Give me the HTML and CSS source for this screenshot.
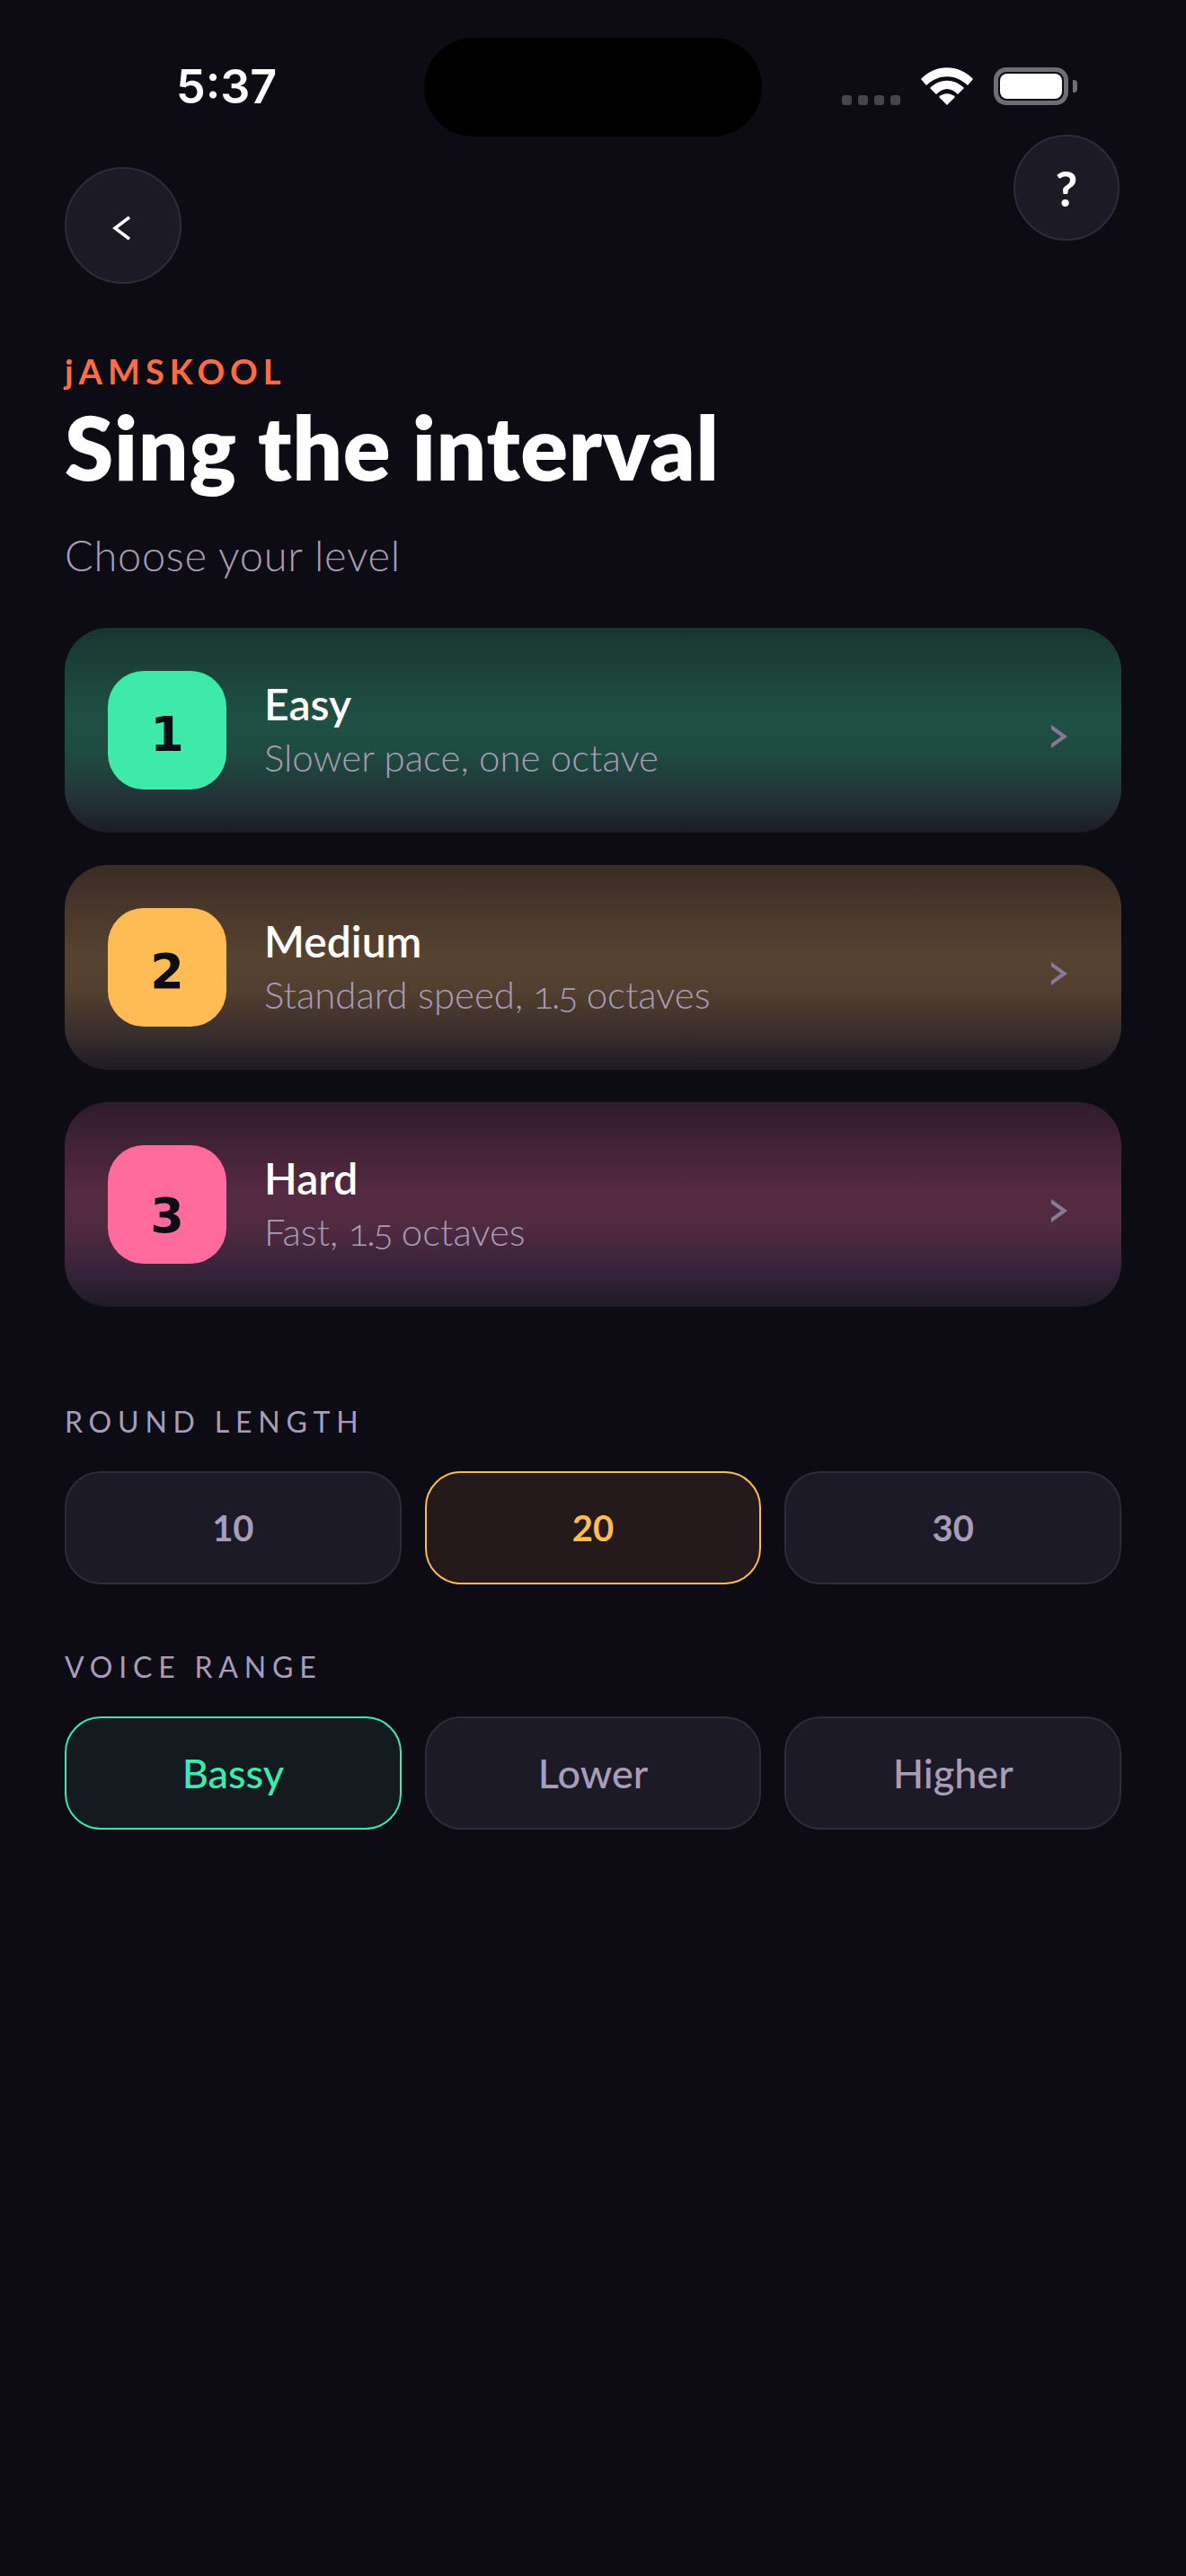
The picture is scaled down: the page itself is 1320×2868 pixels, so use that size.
FILE: index.html
```html
<!DOCTYPE html>
<html lang="en">
<head>
  <meta charset="UTF-8">
  <meta name="viewport" content="width=device-width, initial-scale=1.0">
  <title>Sing the interval</title>
  <link rel="stylesheet" href="styles.css">
</head>
<body>
  <div class="status-bar">
    <div class="time">5:37</div>
    <div class="island"></div>
    <div class="status-icons">
      <div class="signal"><span></span><span></span><span></span><span></span></div>
      <svg class="wifi" width="58" height="42" viewBox="0 0 58 42">
        <path d="M0 13 C16 -4 42 -4 58 13 L52 20 C38 7 20 7 6 20 Z" fill="#fff"/>
        <path d="M10 23 C21 12 37 12 48 23 L41 30 C33 22 25 22 17 30 Z" fill="#fff"/>
        <path d="M20 33 C25 28 33 28 38 33 L29 42 Z" fill="#fff"/>
      </svg>
      <div class="battery"><div class="battery-fill"></div></div>
      <div class="battery-cap"></div>
    </div>
  </div>

  <div class="nav">
    <button class="round-btn back-btn">
      <svg width="20" height="28" viewBox="0 0 20 28"><path d="M19 2 L3 14 L19 26" fill="none" stroke="#fff" stroke-width="3.5"/></svg>
    </button>
    <button class="round-btn help-btn">?</button>
  </div>

  <div class="header">
    <div class="brand">jAMSKOOL</div>
    <h1>Sing the interval</h1>
    <p class="subtitle">Choose your level</p>
  </div>

  <div class="levels">
    <div class="level level-easy">
      <div class="badge">1</div>
      <div class="level-text">
        <div class="level-name">Easy</div>
        <div class="level-desc">Slower pace, one octave</div>
      </div>
      <svg class="chevron" width="18" height="26" viewBox="0 0 18 26"><path d="M0 0 L18 13 L0 26 L0 21 L11 13 L0 5 Z" fill="#857a9a"/></svg>
    </div>
    <div class="level level-medium">
      <div class="badge">2</div>
      <div class="level-text">
        <div class="level-name">Medium</div>
        <div class="level-desc">Standard speed, <span class="tight">1.5</span> octaves</div>
      </div>
      <svg class="chevron" width="18" height="26" viewBox="0 0 18 26"><path d="M0 0 L18 13 L0 26 L0 21 L11 13 L0 5 Z" fill="#857a9a"/></svg>
    </div>
    <div class="level level-hard">
      <div class="badge">3</div>
      <div class="level-text">
        <div class="level-name">Hard</div>
        <div class="level-desc">Fast, <span class="tight">1.5</span> octaves</div>
      </div>
      <svg class="chevron" width="18" height="26" viewBox="0 0 18 26"><path d="M0 0 L18 13 L0 26 L0 21 L11 13 L0 5 Z" fill="#857a9a"/></svg>
    </div>
  </div>

  <div class="section section-round">
    <div class="section-label">ROUND LENGTH</div>
    <div class="options">
      <button class="option option-num">10</button>
      <button class="option option-num active-gold">20</button>
      <button class="option option-num">30</button>
    </div>
  </div>

  <div class="section section-voice">
    <div class="section-label">VOICE RANGE</div>
    <div class="options">
      <button class="option active-green">Bassy</button>
      <button class="option">Lower</button>
      <button class="option">Higher</button>
    </div>
  </div>
</body>
</html>
```

FILE: styles.css
```css
body {
  margin: 0;
  width: 1320px;
  height: 2868px;
  background-color: #0d0b14;
  font-family: Lato, "Open Sans", sans-serif;
  font-variant-numeric: oldstyle-nums;
  color: #fff;
  overflow: hidden;
}

/* status bar */
.status-bar {
  display: grid;
  grid-template-columns: 472px 376px 1fr;
  height: 150px;
}
.time {
  padding: 66px 0 0 196px;
  font-family: Inter, sans-serif;
  font-size: 52px;
  font-weight: 600;
  line-height: 62px;
}
.island {
  margin-top: 42px;
  height: 110px;
  background-color: #000;
  border-radius: 55px;
}
.status-icons {
  display: flex;
  align-items: flex-end;
  height: 42px;
  padding: 75px 0 0 89px;
}
.signal {
  display: flex;
  gap: 7px;
}
.signal span {
  width: 11px;
  height: 11px;
  background-color: #46444d;
  border-radius: 3px;
}
.wifi {
  margin-left: 23px;
}
.battery {
  box-sizing: border-box;
  width: 83px;
  height: 42px;
  margin-left: 23px;
  padding: 2px;
  border: 5px solid #6f6e76;
  border-radius: 14px;
}
.battery-fill {
  height: 100%;
  background-color: #fff;
  border-radius: 8px;
}
.battery-cap {
  width: 5px;
  height: 14px;
  margin: 0 0 14px 5px;
  background-color: #6f6e76;
  border-radius: 0 4px 4px 0;
}

/* back and help */
.nav {
  display: flex;
  justify-content: space-between;
  align-items: flex-start;
  padding: 0 74px 0 72px;
}
.round-btn {
  display: flex;
  align-items: center;
  justify-content: center;
  box-sizing: border-box;
  padding: 0;
  background-color: #1c1a26;
  border: 2px solid #2e2c3a;
  border-radius: 50%;
  color: #fff;
}
.back-btn {
  width: 130px;
  height: 130px;
  margin-top: 36px;
}
.back-btn svg {
  margin-top: 6px;
  margin-right: 4px;
}
.help-btn {
  width: 118px;
  height: 118px;
  font-family: Lato, sans-serif;
  font-size: 54px;
  font-weight: 700;
}

/* header */
.header {
  padding: 74px 72px 0;
}
.brand {
  font-size: 38px;
  font-weight: 700;
  line-height: 46px;
  letter-spacing: 6px;
  color: #ff6b45;
}
h1 {
  margin: 6px 0 0;
  font-size: 98px;
  font-weight: 800;
  line-height: 110px;
  letter-spacing: 0.7px;
}
.subtitle {
  margin: 38px 0 0;
  font-size: 47px;
  font-weight: 300;
  line-height: 56px;
  letter-spacing: 0.7px;
  color: #a89cb8;
}

/* level cards */
.levels {
  display: flex;
  flex-direction: column;
  gap: 36px;
  margin-top: 53px;
  padding: 0 72px;
}
.level {
  display: flex;
  align-items: center;
  height: 228px;
  padding: 0 60px 0 48px;
  border-radius: 48px;
}
.level-easy {
  background: linear-gradient(180deg, #18352e 0%, #1f5145 45%, #1f4a40 62%, #223439 82%, #1d1b27 100%);
}
.level-medium {
  background: linear-gradient(180deg, #392c26 0%, #584331 45%, #513f2f 62%, #3a2e2c 82%, #1d1b27 100%);
}
.level-hard {
  background: linear-gradient(180deg, #2f1b2b 0%, #562a44 45%, #4f2a41 62%, #38223a 82%, #1d1b27 100%);
}
.badge {
  display: flex;
  align-items: center;
  justify-content: center;
  box-sizing: border-box;
  width: 132px;
  height: 132px;
  padding-top: 8px;
  border-radius: 40px;
  font-family: "DejaVu Sans", sans-serif;
  font-size: 54px;
  font-weight: 700;
  color: #0d0b14;
}
.level-easy .badge {
  background-color: #3eeaaa;
}
.level-medium .badge {
  background-color: #ffbc54;
}
.level-hard .badge {
  padding-top: 24px;
  background-color: #ff6b9d;
}
.level-text {
  flex: 1;
  margin-left: 42px;
  padding-bottom: 2px;
}
.level-name {
  font-size: 48px;
  font-weight: 600;
  line-height: 56px;
}
.level-desc {
  margin-top: 6px;
  font-size: 42px;
  font-weight: 300;
  line-height: 50px;
  color: #a89cb8;
}
.tight {
  letter-spacing: -2.5px;
}
.chevron {
  margin-top: 14px;
}

/* option rows */
.section-label {
  font-size: 32px;
  font-weight: 400;
  line-height: 40px;
  letter-spacing: 6.8px;
  color: #a89cb8;
}
.section {
  padding: 0 72px;
}
.section-round {
  margin-top: 108px;
}
.section-voice {
  margin-top: 72px;
}
.options {
  display: grid;
  grid-template-columns: 1fr 1fr 1fr;
  gap: 26px;
  margin-top: 35px;
}
.option {
  box-sizing: border-box;
  height: 126px;
  padding: 0;
  background-color: #1c1a26;
  border: 2px solid #2e2c3a;
  border-radius: 40px;
  font-family: Lato, sans-serif;
  font-size: 45px;
  font-weight: 500;
  color: #a89cb8;
}
.option-num {
  font-size: 40px;
  font-weight: 700;
}
.active-gold {
  background-color: #241a1c;
  border-color: #ffbc54;
  color: #ffbc54;
}
.active-green {
  background-color: #141b20;
  border-color: #3eeaaa;
  color: #3eeaaa;
}
```
